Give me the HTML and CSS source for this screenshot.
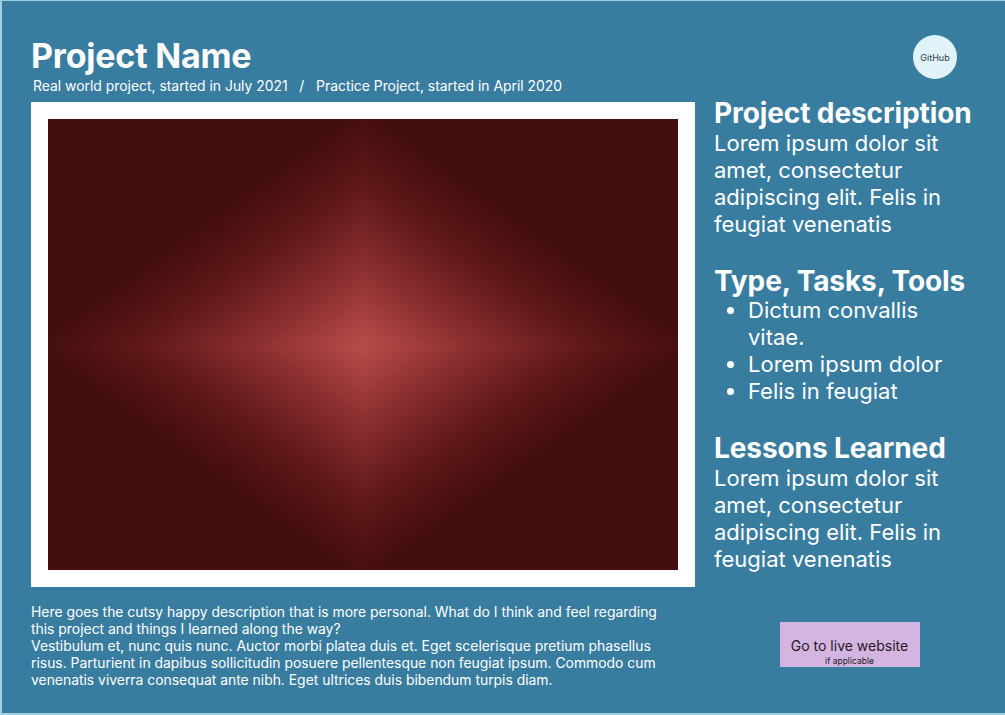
FILE: index.html
```html
<!DOCTYPE html>
<html lang="en">
<head>
<meta charset="utf-8">
<title>Project Name</title>
<link rel="stylesheet" href="styles.css">
</head>
<body>
<div class="page">
  <header class="header">
    <div class="titles">
      <h1 class="title">Project Name</h1>
      <p class="subtitle">Real world project, started in July 2021 &nbsp; / &nbsp; Practice Project, started in April 2020</p>
    </div>
    <a class="github" href="#">GitHub</a>
  </header>
  <main class="main">
    <div class="frame">
      <div class="picture"></div>
    </div>
    <aside class="side">
      <section class="block">
        <h2 class="block-title">Project description</h2>
        <p class="block-text">Lorem ipsum dolor sit amet, consectetur adipiscing elit. Felis in feugiat venenatis</p>
      </section>
      <section class="block">
        <h2 class="block-title">Type, Tasks, Tools</h2>
        <ul class="block-list">
          <li>Dictum convallis vitae.</li>
          <li>Lorem ipsum dolor</li>
          <li>Felis in feugiat</li>
        </ul>
      </section>
      <section class="block">
        <h2 class="block-title">Lessons Learned</h2>
        <p class="block-text">Lorem ipsum dolor sit amet, consectetur adipiscing elit. Felis in feugiat venenatis</p>
      </section>
    </aside>
  </main>
  <footer class="bottom">
    <p class="personal">Here goes the cutsy happy description that is more personal. What do I think and feel regarding this project and things I learned along the way?<br>Vestibulum et, nunc quis nunc. Auctor morbi platea duis et. Eget scelerisque pretium phasellus risus. Parturient in dapibus sollicitudin posuere pellentesque non feugiat ipsum. Commodo cum venenatis viverra consequat ante nibh. Eget ultrices duis bibendum turpis diam.</p>
    <div class="live-wrap">
      <a class="live" href="#">
        <span class="live-main">Go to live website</span>
        <span class="live-sub">if applicable</span>
      </a>
    </div>
  </footer>
</div>
</body>
</html>
```

FILE: styles.css
```css
* { box-sizing: border-box; }
html, body { margin: 0; padding: 0; }
body {
  background: #9fcfe3;
  font-family: Inter, "Noto Sans", "Liberation Sans", sans-serif;
  color: #ffffff;
}
.page {
  width: 1005px;
  height: 715px;
  background: #387d9f;
  border-left: 2px solid #9fcfe3;
  border-top: 1px solid #9fcfe3;
  border-bottom: 2px solid #9fcfe3;
  padding: 36px 30px 0 29px;
  display: flex;
  flex-direction: column;
}
.header {
  display: flex;
  justify-content: space-between;
  align-items: flex-start;
  height: 65px;
}
.title {
  margin: 0;
  font-size: 34px;
  font-weight: 700;
  line-height: 38px;
  letter-spacing: -0.2px;
}
.subtitle {
  margin: 3px 0 0 2px;
  font-size: 13.9px;
  line-height: 17px;
  font-weight: 400;
}
.github {
  width: 44px;
  height: 44px;
  border-radius: 50%;
  background: #dff3f8;
  color: #2a3f48;
  font-size: 9px;
  text-decoration: none;
  display: flex;
  align-items: center;
  justify-content: center;
  margin: -2px 18px 0 0;
}
.main {
  display: grid;
  grid-template-columns: 664px 1fr;
  column-gap: 19px;
}
.frame {
  background: #ffffff;
  padding: 17px;
  height: 485px;
}
.picture {
  width: 100%;
  height: 100%;
  background:
    linear-gradient(to top left, #b84c4c 0%, #8a2e2f 18%, #5f1819 36%, #4a1011 48%, #440e0f 52%, #440e0f 100%) left top / 50% calc(50% + 1px) no-repeat,
    linear-gradient(to top right, #b84c4c 0%, #8a2e2f 18%, #5f1819 36%, #4a1011 48%, #440e0f 52%, #440e0f 100%) right top / 50% calc(50% + 1px) no-repeat,
    linear-gradient(to bottom left, #b84c4c 0%, #8a2e2f 18%, #5f1819 36%, #4a1011 48%, #440e0f 52%, #440e0f 100%) left bottom / 50% 50% no-repeat,
    linear-gradient(to bottom right, #b84c4c 0%, #8a2e2f 18%, #5f1819 36%, #4a1011 48%, #440e0f 52%, #440e0f 100%) right bottom / 50% 50% no-repeat;
  background-color: #440e0f;
}
.side {
  display: flex;
  flex-direction: column;
  gap: 26px;
  margin-top: -6px;
}
.block-title {
  margin: 0;
  font-size: 28px;
  font-weight: 700;
  line-height: 34px;
  letter-spacing: -0.1px;
}
.block-text {
  margin: 0;
  font-size: 22px;
  line-height: 27px;
  font-weight: 400;
}
.block-list {
  margin: -1px 0 0;
  padding-left: 34px;
  font-size: 22px;
  line-height: 27px;
}
.bottom {
  display: grid;
  grid-template-columns: 664px 1fr;
  column-gap: 19px;
  margin-top: 17px;
}
.personal {
  margin: 0;
  font-size: 13.9px;
  line-height: 17px;
  width: 640px;
}
.live-wrap {
  display: flex;
  justify-content: center;
  padding: 18px 0 0 10px;
}
.live {
  width: 140px;
  height: 45px;
  background: #d4b4e0;
  color: #1f1a24;
  text-decoration: none;
  display: flex;
  flex-direction: column;
  align-items: center;
  justify-content: flex-end;
  padding-bottom: 1px;
}
.live-main {
  font-size: 14px;
  line-height: 17px;
  margin-bottom: 2px;
}
.live-sub {
  font-size: 8.5px;
  line-height: 10px;
}
```
